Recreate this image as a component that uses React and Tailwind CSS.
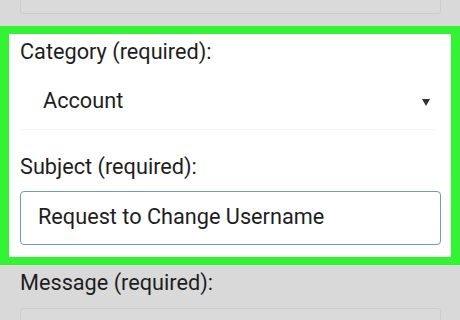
export default function App() {
  return (
    <div
      className="w-[460px] h-[320px] overflow-hidden bg-[#d9d9d9] text-[#1e1e1e]"
      style={{ fontFamily: "Roboto, 'Noto Sans', sans-serif" }}
    >
      <div className="pl-[20px] pr-[19px]">
        <div className="h-[14px] border-x border-b border-[#cdcdcd] rounded-b-[3px] bg-[#dadada]" />
      </div>
      <div className="mt-[12px] border-x-[9px] border-y-[8px] border-[#33f433] bg-white pl-[11px] pr-[10px] pb-[12px]">
        <div className="mt-[6px] h-[24px] leading-[24px] text-[21.7px]">Category (required):</div>
        <div className="mr-[6px] h-[66px] border-b border-[#f5f5f5] flex items-start pt-[25px] pl-[23px] pr-[5px]">
          <span className="flex-1 h-[24px] leading-[24px] text-[21.7px]">Account</span>
          <svg width="8" height="7" viewBox="0 0 8 7" className="mt-[10px]">
            <path d="M0 0 H8 L4 7 Z" fill="#333" />
          </svg>
        </div>
        <div className="mt-[25px] h-[24px] leading-[24px] text-[21.7px]">Subject (required):</div>
        <div className="mt-[12px] h-[54px] border-[1.5px] border-[#6f9bc2] rounded-[4px] pl-[17px] pt-[13px]">
          <div className="h-[24px] leading-[24px] text-[21.7px]">Request to Change Username</div>
        </div>
      </div>
      <div className="pl-[20px] pr-[19px]">
        <div className="mt-[6px] h-[24px] leading-[24px] text-[21.7px]">Message (required):</div>
        <div className="mt-[13px] h-[40px] border border-[#cdcdcd] rounded-[3px] bg-[#dadada]" />
      </div>
    </div>
  );
}
